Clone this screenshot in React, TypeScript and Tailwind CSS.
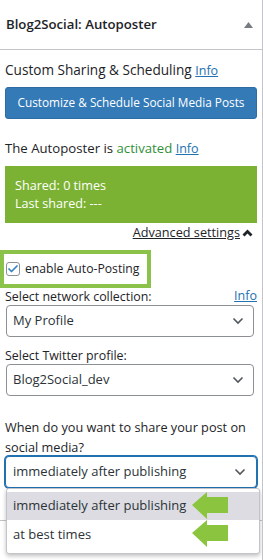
import { Check } from "lucide-react";

const font = { fontFamily: '"Open Sans", "Noto Sans", sans-serif' };

function Chevron() {
    return (
        <svg width="12" height="8" viewBox="0 0 12 8" className="shrink-0">
            <path d="M1.5 1.5 L6 6 L10.5 1.5" fill="none" stroke="#50575e" strokeWidth="1.6" />
        </svg>
    );
}

function Select({ value, focused }: { value: string; focused?: boolean }) {
    return (
        <div
            className={
                focused
                    ? "flex items-center justify-between h-[32px] mx-0 pl-[7px] pr-[10px] rounded-[4px] border border-[#2271b1] shadow-[0_0_0_1px_#2271b1] text-[13px] text-[#2c3338] bg-white"
                    : "flex items-center justify-between h-[32px] ml-[1px] mr-[3px] pl-[6px] pr-[9px] rounded-[4px] border border-[#8c8f94] text-[13px] text-[#2c3338] bg-white"
            }
        >
            <span>{value}</span>
            <Chevron />
        </div>
    );
}

function Arrow() {
    return (
        <svg width="37" height="28" viewBox="0 0 37 28" className="absolute left-[185px] top-[0px]">
            <path d="M0 13 L15 0 L15 5 L36 5 L36 21 L15 21 L15 27 Z" fill="#8bc540" />
        </svg>
    );
}

export default function App() {
    return (
        <div className="w-[263px] h-[560px] bg-white border-r border-[#c3c4c7] text-[#1d2327] overflow-hidden" style={font}>
            <div className="flex items-center justify-between h-[50px] border-b border-[#c3c4c7] pl-[6px] pr-[9px]">
                <span className="text-[13.2px] font-semibold">Blog2Social: Autoposter</span>
                <svg width="9" height="6" viewBox="0 0 9 6">
                    <path d="M0 6 L4.5 0 L9 6 Z" fill="#787c82" />
                </svg>
            </div>

            <div className="px-[5px]">
                <div className="mt-[10px] leading-[20px] text-[13.6px]">
                    Custom Sharing &amp; Scheduling{" "}
                    <a className="text-[#2271b1] underline text-[12.5px]">Info</a>
                </div>
                <button className="block mt-[6px] w-[252px] h-[32px] rounded-[3px] bg-[#337ab7] border border-[#2e6da4] text-white text-[11.8px]">
                    Customize &amp; Schedule Social Media Posts
                </button>

                <div className="mt-[19px] leading-[20px] text-[13.2px]">
                    The Autoposter is <span className="text-[#2f8f36]">activated</span>{" "}
                    <a className="text-[#2271b1] underline text-[12.5px]">Info</a>
                </div>
                <div className="mt-[7px] h-[57px] w-[252px] bg-[#7cb233] text-white text-[12.6px] leading-[18px] pt-[11px] pl-[10px]">
                    <div>Shared: 0 times</div>
                    <div>Last shared: ---</div>
                </div>

                <div className="flex justify-end items-center h-[19px] pr-[4px] text-[12.7px]">
                    <span className="underline">Advanced settings </span>
                    <svg width="11" height="8" viewBox="0 0 11 8" className="ml-[2px]">
                        <path d="M1.5 6.5 L5.5 2.5 L9.5 6.5" fill="none" stroke="#1d2327" strokeWidth="2.8" />
                    </svg>
                </div>
            </div>

            <div className="mt-[8px] w-[151px] h-[38px] border-[4px] border-[#8bc34a] flex items-center pl-[2px] gap-[5px] text-[12.2px]">
                <span className="w-[14px] h-[14px] rounded-[3px] border border-[#8c8f94] flex items-center justify-center bg-white">
                    <Check size={12} strokeWidth={3.5} className="text-[#3582c4]" />
                </span>
                <span className="whitespace-nowrap">enable Auto-Posting</span>
            </div>

            <div className="px-[5px]">
                <div className="flex justify-between items-center leading-[17px] text-[12.4px]">
                    <span>Select network collection:</span>
                    <a className="text-[#2271b1] underline text-[12.5px] -mt-[2px]">Info</a>
                </div>
                <Select value="My Profile" />

                <div className="mt-[10px] leading-[17px] text-[12.4px]">Select Twitter profile:</div>
                <Select value="Blog2Social_dev" />

                <div className="mt-[21px] leading-[20px] text-[12.7px]">
                    When do you want to share your post on social media?
                </div>
                <div className="relative -mt-[1px]">
                    <Select value="immediately after publishing" focused />
                    <div className="absolute left-[1px] top-[32px] w-[254px] h-[66px] bg-white border border-[#c3c4c7] rounded-[3px] shadow-[0_2px_4px_rgba(0,0,0,0.25)] pt-[3px] text-[13px] text-[#2c3338] z-10">
                        <div className="relative h-[28px] bg-[#dcdce2] flex items-center pl-[6px]">
                            immediately after publishing
                            <Arrow />
                        </div>
                        <div className="relative h-[29px] flex items-center pl-[6px]">
                            at best times
                            <Arrow />
                        </div>
                    </div>
                </div>
            </div>
            <div className="mt-[32px] border-t border-[#c3c4c7]" />
        </div>
    );
}
